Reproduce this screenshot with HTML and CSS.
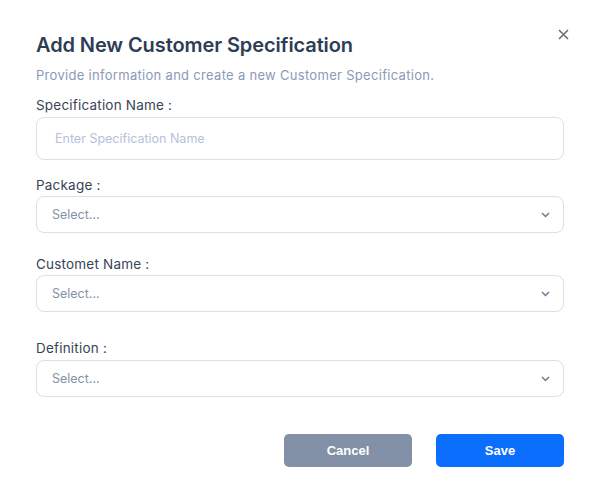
FILE: index.html
```html
<!DOCTYPE html>
<html>
<head>
<meta charset="utf-8">
<link rel="stylesheet" href="styles.css">
</head>
<body>
<div class="modal">
  <button class="close" aria-label="Close">
    <svg width="11" height="11" viewBox="0 0 11 11"><path d="M1 1L10 10M10 1L1 10" stroke="#6f6f73" stroke-width="1.6" fill="none"/></svg>
  </button>
  <h2 class="title">Add New Customer Specification</h2>
  <p class="subtitle">Provide information and create a new Customer Specification.</p>

  <div class="field f1">
    <label class="label">Specification Name :</label>
    <div class="input"><span class="placeholder">Enter Specification Name</span></div>
  </div>

  <div class="field f2">
    <label class="label">Package :</label>
    <div class="select"><span class="sel-text">Select...</span><svg class="chev" width="9" height="6" viewBox="0 0 9 6"><path d="M1 1L4.5 4.5L8 1" stroke="#6b7a96" stroke-width="1.5" fill="none"/></svg></div>
  </div>

  <div class="field f3">
    <label class="label">Customet Name :</label>
    <div class="select"><span class="sel-text">Select...</span><svg class="chev" width="9" height="6" viewBox="0 0 9 6"><path d="M1 1L4.5 4.5L8 1" stroke="#6b7a96" stroke-width="1.5" fill="none"/></svg></div>
  </div>

  <div class="field f4">
    <label class="label">Definition :</label>
    <div class="select"><span class="sel-text">Select...</span><svg class="chev" width="9" height="6" viewBox="0 0 9 6"><path d="M1 1L4.5 4.5L8 1" stroke="#6b7a96" stroke-width="1.5" fill="none"/></svg></div>
  </div>

  <div class="actions">
    <button class="btn cancel">Cancel</button>
    <button class="btn save">Save</button>
  </div>
</div>
</body>
</html>
```
FILE: styles.css
```css
* { box-sizing: border-box; }
html, body { margin: 0; padding: 0; background: #fff; }
body { font-family: Inter, "Noto Sans", sans-serif; width: 598px; height: 491px; overflow: hidden; }
.modal { position: relative; padding: 33px 34px 0 36px; }
.close { position: absolute; top: 29px; right: 29px; width: 11px; height: 11px; padding: 0; border: 0; background: none; display: block; }
.close svg { display: block; }
.title { margin: 0; font-size: 20px; line-height: 24px; font-weight: 600; color: #2e3d55; letter-spacing: -0.1px; }
.subtitle { margin: 9px 0 0; font-size: 13px; line-height: 18px; color: #8a9ab8; letter-spacing: 0.3px; }
.field { display: flex; flex-direction: column; }
.label { font-size: 13.5px; line-height: 18px; color: #384456; letter-spacing: 0.2px; }
.f1 { margin-top: 12px; }
.f1 .label { margin-bottom: 3px; }
.f2 { margin-top: 16px; }
.f3 { margin-top: 22px; }
.f4 { margin-top: 27px; }
.f2 .label, .f3 .label { margin-bottom: 2px; }
.f4 .label { margin-bottom: 3px; }
.input { height: 43px; border: 1px solid #dcdfea; border-radius: 8px; display: flex; align-items: center; padding-left: 18px; }
.placeholder { font-size: 12.5px; color: #b4c1dc; }
.select { height: 37px; border: 1px solid #dcdfea; border-radius: 8px; display: flex; align-items: center; justify-content: space-between; padding: 0 13px 0 15px; }
.sel-text { font-size: 12.5px; color: #8592aa; }
.chev { display: block; }
.actions { display: flex; justify-content: flex-end; gap: 24px; margin-top: 37px; }
.btn { width: 128px; height: 33px; border: 0; border-radius: 5px; color: #fff; font-family: "Liberation Sans", Arial, sans-serif; font-weight: 700; font-size: 13px; }
.cancel { background: #8290a8; }
.save { background: #0c6efd; }
```
